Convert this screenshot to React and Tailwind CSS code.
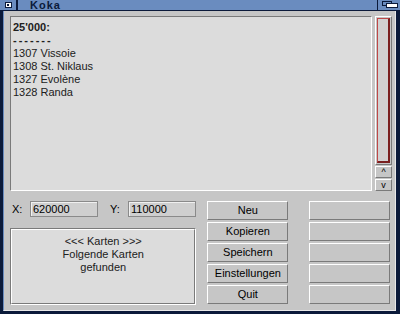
const lines = ['1307 Vissoie', '1308 St. Niklaus', '1327 Evolène', '1328 Randa'];
const buttons = ['Neu', 'Kopieren', 'Speichern', 'Einstellungen', 'Quit'];

function Button({ label }) {
  return (
    <div className="h-[19px] flex items-center justify-center bg-[#c6c6c6] border border-t-white border-l-white border-r-[#7a7a7a] border-b-[#7a7a7a] leading-none">
      {label}
    </div>
  );
}

function Field({ label, value }) {
  return (
    <div className="flex items-center gap-[6px]">
      <span className="w-[12px]">{label}</span>
      <div className="w-[68px] h-[16px] flex items-center pl-[2px] bg-[#cfcfcf] border border-[#8a8a8a] shadow-[inset_1px_1px_0_#f0f0f0]">
        {value}
      </div>
    </div>
  );
}

export default function App() {
  return (
    <div className="w-[400px] h-[314px] flex flex-col bg-[#c6c6c6] text-[11px] text-black font-['Liberation_Sans',Arial,sans-serif] overflow-hidden">
      {/* Title bar */}
      <div className="h-[11px] flex bg-[#6a8cbf] border-b border-[#0b1a3a]">
        <div className="w-[18px] flex items-center justify-center border-r-2 border-[#0b1a3a]">
          <div className="w-[7px] h-[6px] bg-white border border-[#0b1a3a] flex items-center justify-center">
            <div className="w-[2px] h-[2px] bg-[#0b1a3a]" />
          </div>
        </div>
        <div className="flex-1 pl-[12px] font-bold text-[11px] leading-[10px] text-[#0b1a3a] tracking-[1px]">Koka</div>
        <div className="w-[23px] relative border-l border-[#0b1a3a]">
          <div className="absolute left-[4px] top-[1px] w-[10px] h-[5px] border border-[#0b1a3a] bg-[#6a8cbf]" />
          <div className="absolute left-[8px] top-[3px] w-[12px] h-[5px] border border-[#0b1a3a] bg-white" />
        </div>
      </div>

      {/* Window body */}
      <div className="flex-1 flex flex-col border-l-[3px] border-l-[#0b1a3a] border-r-[4px] border-r-[#0b1a3a] border-b-[3px] border-b-[#0b1a3a]">
        <div className="flex-1 flex flex-col border-l border-l-[#6a8cbf] border-r border-r-[#e8e8e8] border-b border-b-[#e8e8e8] pl-[6px] pr-[3px] pt-[5px] pb-[3px]">
          {/* List + scroller */}
          <div className="h-[175px] flex gap-[3px]">
            <div className="flex-1 bg-[#dcdcdc] border border-t-[#7a7a7a] border-l-[#7a7a7a] border-r-white border-b-white px-[2px] pt-[4px] leading-[13px] text-[#202020]">
              <div className="font-bold">25'000:</div>
              <div className="font-bold tracking-[2px]">-------</div>
              {lines.map((l) => (
                <div key={l}>{l}</div>
              ))}
            </div>
            <div className="w-[17px] flex flex-col gap-[1px]">
              <div className="flex-1 bg-[#c6c6c6] border border-t-white border-l-white border-r-[#7a7a7a] border-b-[#7a7a7a] p-[1px]">
                <div className="h-full bg-[#d2d2d2] border border-[#c04848] border-r-2 border-r-[#7a2020] border-b-2 border-b-[#7a2020]" />
              </div>
              <div className="h-[12px] flex items-center justify-center bg-[#c6c6c6] border border-t-white border-l-white border-r-[#7a7a7a] border-b-[#7a7a7a] text-[9px] leading-none">^</div>
              <div className="h-[12px] flex items-center justify-center bg-[#c6c6c6] border border-t-white border-l-white border-r-[#7a7a7a] border-b-[#7a7a7a] text-[9px] leading-none">v</div>
            </div>
          </div>

          {/* Lower section */}
          <div className="flex mt-[10px] pr-[2px]">
            <div className="w-[187px] flex flex-col">
              <div className="flex items-center gap-[12px] pl-[2px]">
                <Field label="X:" value="620000" />
                <Field label="Y:" value="110000" />
              </div>
              <div className="mt-[10px] h-[77px] bg-[#dcdcdc] border border-t-[#7a7a7a] border-l-[#7a7a7a] border-r-white border-b-white">
                <div className="h-full border border-t-white border-l-white border-r-[#7a7a7a] border-b-[#7a7a7a] flex flex-col items-center pt-[5px] leading-[13px] text-[#202020]">
                  <div>&lt;&lt;&lt; Karten &gt;&gt;&gt;</div>
                  <div>Folgende Karten</div>
                  <div>gefunden</div>
                </div>
              </div>
            </div>
            <div className="w-[81px] ml-[11px] flex flex-col gap-[2px]">
              {buttons.map((b) => (
                <Button key={b} label={b} />
              ))}
            </div>
            <div className="w-[81px] ml-[21px] flex flex-col gap-[2px]">
              {buttons.map((b) => (
                <Button key={b} label="" />
              ))}
            </div>
          </div>
        </div>
      </div>
    </div>
  );
}
